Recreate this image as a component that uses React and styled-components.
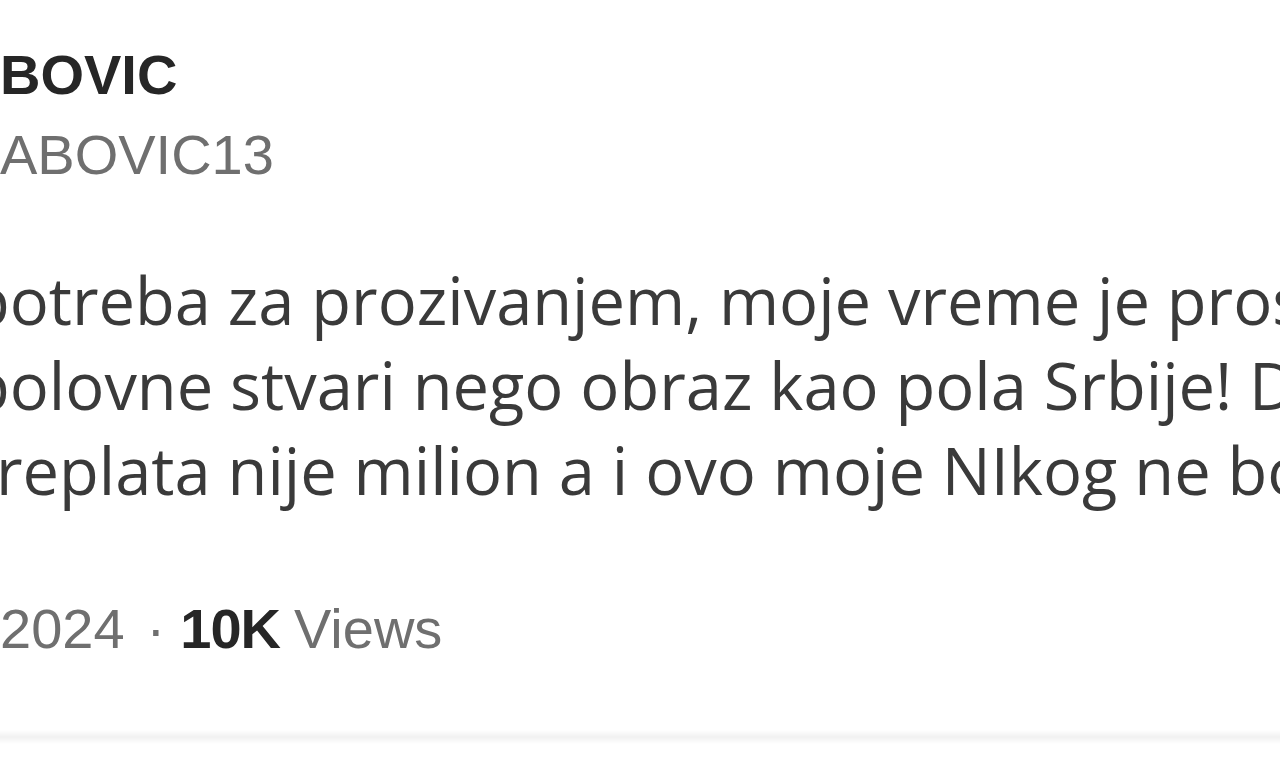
import React from "react";
import styled, { createGlobalStyle } from "styled-components";

const Global = createGlobalStyle`
  html, body { margin: 0; padding: 0; background: #ffffff; }
  #root { width: 1280px; height: 768px; }
`;

const Page = styled.div`
  width: 1280px;
  height: 768px;
  overflow: hidden;
  background: #ffffff;
  display: flex;
  flex-direction: column;
  filter: blur(0.7px);
`;

const Tweet = styled.article`
  display: flex;
  flex-direction: column;
  padding-top: 47px;
  flex: 1;
`;

const Name = styled.div`
  font-family: "Liberation Sans", Arial, sans-serif;
  font-weight: 700;
  font-size: 56px;
  line-height: 56px;
  color: #262626;
  white-space: nowrap;
`;

const Handle = styled.div`
  margin-top: 24px;
  font-family: "Liberation Sans", Arial, sans-serif;
  font-size: 56px;
  line-height: 56px;
  color: #6f6f6f;
  white-space: nowrap;
`;

const Body = styled.div`
  margin-top: 75px;
  display: flex;
  flex-direction: column;
`;

const Line = styled.div`
  font-family: "Open Sans", "Noto Sans", sans-serif;
  font-size: 65px;
  line-height: 85px;
  color: #3a3a3a;
  white-space: nowrap;
  margin-left: ${(p) => p.$shift}px;
`;

const Meta = styled.div`
  margin-top: 88px;
  font-family: "Liberation Sans", Arial, sans-serif;
  font-size: 56px;
  line-height: 56px;
  color: #6f6f6f;
  white-space: nowrap;
  display: flex;
  align-items: baseline;
`;

const Dot = styled.span`
  margin: 0 15px 0 22px;
`;

const Strong = styled.span`
  font-weight: 700;
  color: #262626;
  margin-right: 14px;
  letter-spacing: -1px;
`;

const Divider = styled.div`
  margin-top: auto;
  margin-bottom: 24px;
  height: 14px;
  background: linear-gradient(#ffffff, #f1f1f1 50%, #ffffff);
`;

export default function App() {
  return (
    <>
      <Global />
      <Page>
        <Tweet>
          <Name>BOVIC</Name>
          <Handle>ABOVIC13</Handle>
          <Body>
            <Line $shift={-30}>potreba za prozivanjem, moje vreme je pros</Line>
            <Line $shift={-30}>polovne stvari nego obraz kao pola Srbije! D</Line>
            <Line $shift={-4}>replata nije milion a i ovo moje NIkog ne bo</Line>
          </Body>
          <Meta>
            2024<Dot>·</Dot>
            <Strong>10K</Strong>Views
          </Meta>
          <Divider />
        </Tweet>
      </Page>
    </>
  );
}
